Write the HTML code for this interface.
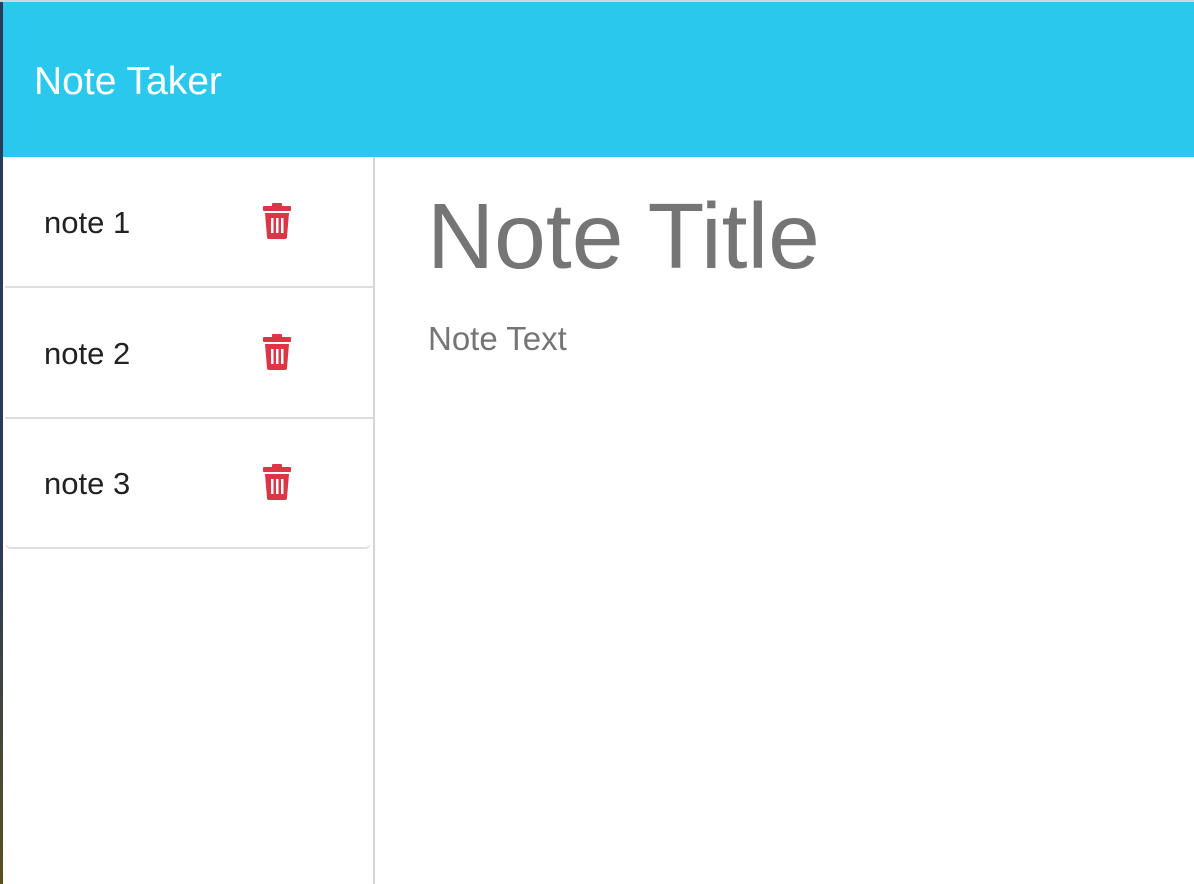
<!DOCTYPE html>
<html><head><style>
html,body{margin:0;padding:0;width:1194px;height:884px;overflow:hidden;background:#fff;font-family:"Liberation Sans",sans-serif}
.edge{position:absolute;left:0;top:0;width:3px;height:884px;background:linear-gradient(#2a3a5a,#2a3a5a 60%,#5a5020)}
.hdr{position:absolute;left:3px;top:2px;right:0;height:155px;background:#2bc8ee}
.topline{position:absolute;left:0;top:0;right:0;height:2px;background:#c8d8e0}
.hdr span{position:absolute;left:31px;top:58px;color:#fff;font-size:39px}
.side{position:absolute;left:3px;top:157px;width:370px;height:727px;border-right:2px solid #d4d4d4;background:#fff;border-bottom-left-radius:10px}
.item{position:absolute;left:2px;width:368px;height:129px;border-bottom:2px solid #dedede}
.item span{position:absolute;left:39px;top:48px;font-size:31px;color:#222}
.item svg{position:absolute;left:256px;top:46px}
.last{border-bottom-left-radius:6px;border-bottom-right-radius:6px}
.title{position:absolute;left:427px;top:183px;font-size:93px;color:#757575}
.text{position:absolute;left:428px;top:320px;font-size:33px;color:#757575}
</style></head><body>
<div class="edge"></div>
<div class="hdr"><span>Note Taker</span></div>
<div class="topline"></div>
<div class="side">
<div class="item" style="top:0"><span>note 1</span><svg width="32" height="36" viewBox="0 0 32 36"><rect x="2" y="3" width="28" height="5" rx="1" fill="#dc3545"/><rect x="11" y="0" width="10" height="4" rx="1" fill="#dc3545"/><path d="M4 10h24l-2 24a2 2 0 0 1-2 2H8a2 2 0 0 1-2-2z" fill="#dc3545"/><rect x="10" y="15" width="2.5" height="15" fill="#fff"/><rect x="15" y="15" width="2.5" height="15" fill="#fff"/><rect x="20" y="15" width="2.5" height="15" fill="#fff"/></svg></div>
<div class="item" style="top:131px"><span>note 2</span><svg width="32" height="36" viewBox="0 0 32 36"><rect x="2" y="3" width="28" height="5" rx="1" fill="#dc3545"/><rect x="11" y="0" width="10" height="4" rx="1" fill="#dc3545"/><path d="M4 10h24l-2 24a2 2 0 0 1-2 2H8a2 2 0 0 1-2-2z" fill="#dc3545"/><rect x="10" y="15" width="2.5" height="15" fill="#fff"/><rect x="15" y="15" width="2.5" height="15" fill="#fff"/><rect x="20" y="15" width="2.5" height="15" fill="#fff"/></svg></div>
<div class="item last" style="top:261px;width:366px"><span>note 3</span><svg width="32" height="36" viewBox="0 0 32 36"><rect x="2" y="3" width="28" height="5" rx="1" fill="#dc3545"/><rect x="11" y="0" width="10" height="4" rx="1" fill="#dc3545"/><path d="M4 10h24l-2 24a2 2 0 0 1-2 2H8a2 2 0 0 1-2-2z" fill="#dc3545"/><rect x="10" y="15" width="2.5" height="15" fill="#fff"/><rect x="15" y="15" width="2.5" height="15" fill="#fff"/><rect x="20" y="15" width="2.5" height="15" fill="#fff"/></svg></div>
</div>
<div class="title">Note Title</div>
<div class="text">Note Text</div>
</body></html>
